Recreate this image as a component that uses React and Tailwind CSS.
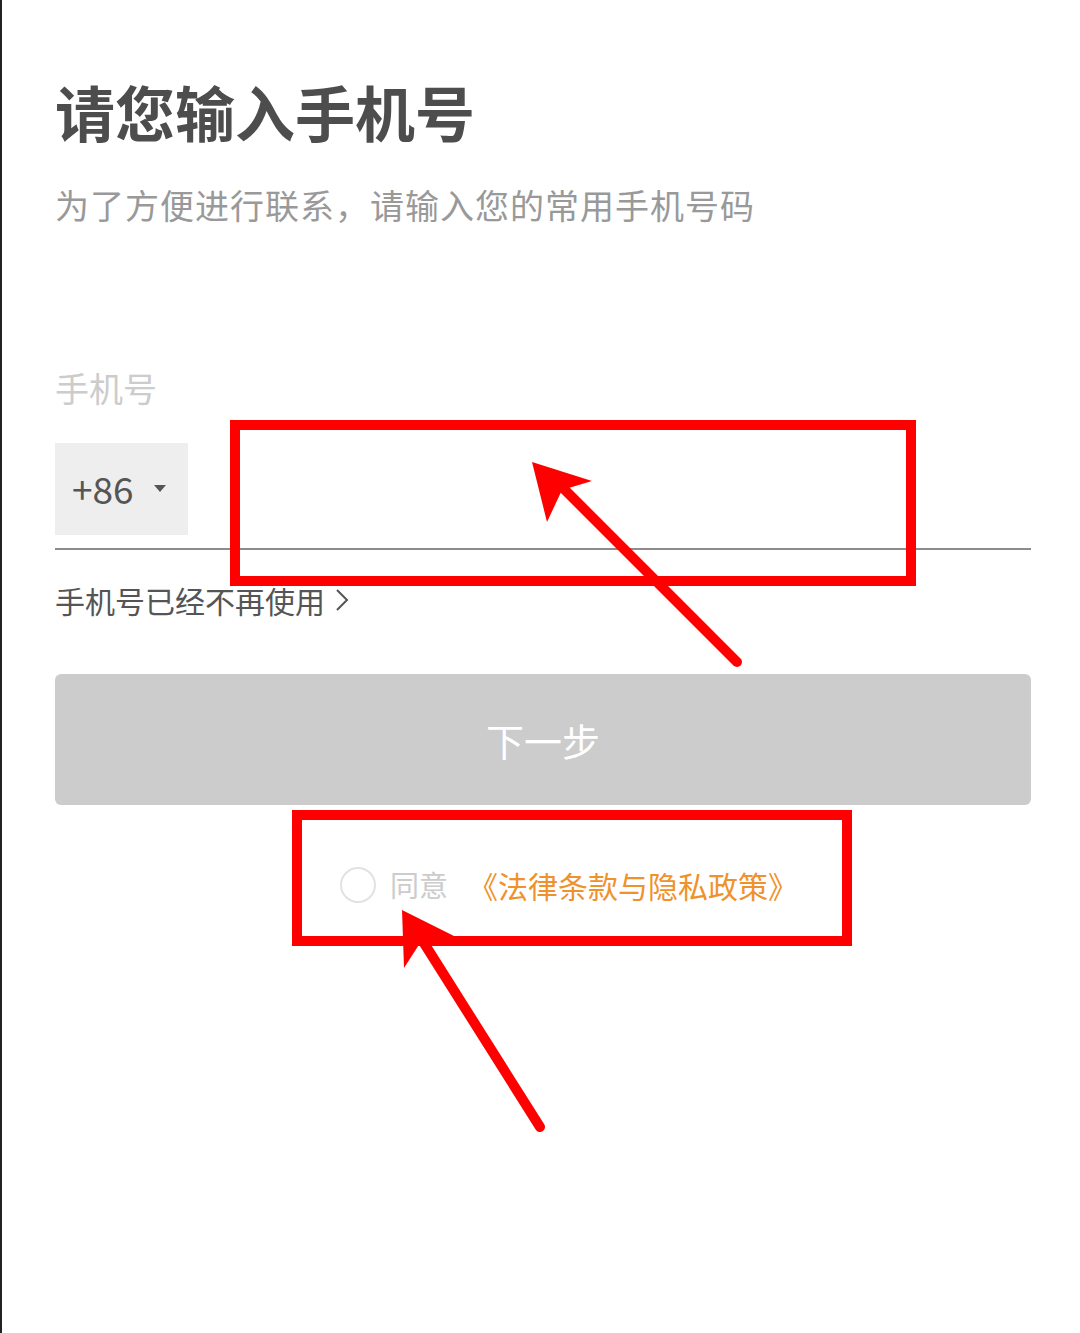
import React from "react";

const font = { fontFamily: '"Noto Sans CJK SC", "Noto Sans", sans-serif' };

const Annotations = () => (
  <svg
    className="absolute inset-0 pointer-events-none"
    width="1080"
    height="1333"
    viewBox="0 0 1080 1333"
  >
    <rect x="233" y="425" width="676" height="156" fill="none" stroke="#ff0000" strokeWidth="10" />
    <rect x="295" y="815" width="550" height="126" fill="none" stroke="#ff0000" strokeWidth="10" />
    {/* arrow to input */}
    <line x1="735" y1="662" x2="555" y2="482" stroke="#ff0000" strokeWidth="10" strokeLinecap="round" />
    <polygon points="530,462 590,481 560,490 545,522" fill="#ff0000" />
    {/* arrow to checkbox */}
    <line x1="538" y1="1127" x2="415" y2="932" stroke="#ff0000" strokeWidth="10" strokeLinecap="round" />
    <polygon points="400,910 456,938 420,940 402,968" fill="#ff0000" />
  </svg>
);

export default function App() {
  return (
    <div className="relative w-[1080px] h-[1333px] bg-white border-l-2 border-[#222]" style={font}>
      <div className="flex flex-col pt-[78px] pl-[53px] pr-[49px]">
        <h1 className="text-[60px] leading-[66px] font-bold text-[#4d4d4d]">请您输入手机号</h1>
        <p className="mt-[41px] text-[34px] leading-[40px] tracking-[1px] text-[#999999]">
          为了方便进行联系，请输入您的常用手机号码
        </p>

        <div className="mt-[143px] text-[34px] leading-[40px] text-[#cccccc]">手机号</div>

        <div className="mt-[35px] flex items-start pb-[13px] border-b-2 border-[#8c8c8c]">
          <div className="w-[133px] h-[92px] bg-[#eeeeee] flex items-center pl-[17px] gap-[20px]">
            <span className="text-[37px] text-[#555555]">+86</span>
            <svg width="12" height="8" viewBox="0 0 12 8">
              <polygon points="0,0 12,0 6,7" fill="#555555" />
            </svg>
          </div>
          <div className="flex-1 h-[92px]" />
        </div>

        <div className="mt-[32px] flex items-center gap-[10px] text-[30px] leading-[36px] text-[#555555]">
          <span>手机号已经不再使用</span>
          <svg width="14" height="24" viewBox="0 0 14 24">
            <polyline points="2,2 12,12 2,22" fill="none" stroke="#555555" strokeWidth="2" />
          </svg>
        </div>

        <div className="mt-[56px] h-[131px] rounded-[6px] bg-[#cccccc] flex items-center justify-center">
          <span className="text-[38px] text-white">下一步</span>
        </div>

        <div className="mt-[60px] flex items-center h-[40px] pl-[285px]">
          <div className="w-[36px] h-[36px] rounded-full border-2 border-[#e2e2e2]" />
          <span className="ml-[14px] text-[29px] text-[#cccccc]">同意</span>
          <span className="ml-[20px] text-[30px] text-[#f0922b]">《法律条款与隐私政策》</span>
        </div>
      </div>
      <Annotations />
    </div>
  );
}
